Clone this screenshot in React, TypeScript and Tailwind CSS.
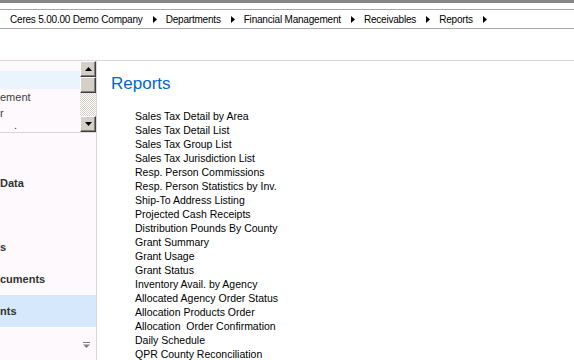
import type { ReactNode } from 'react';

// ─── Данные ─────────────────────────────
const CRUMBS = ['Ceres 5.00.00 Demo Company', 'Departments', 'Financial Management', 'Receivables', 'Reports'];

const REPORTS = [
	'Sales Tax Detail by Area',
	'Sales Tax Detail List',
	'Sales Tax Group List',
	'Sales Tax Jurisdiction List',
	'Resp. Person Commissions',
	'Resp. Person Statistics by Inv.',
	'Ship-To Address Listing',
	'Projected Cash Receipts',
	'Distribution Pounds By County',
	'Grant Summary',
	'Grant Usage',
	'Grant Status',
	'Inventory Avail. by Agency',
	'Allocated Agency Order Status',
	'Allocation Products Order',
	'Allocation\u00a0 Order Confirmation',
	'Daily Schedule',
	'QPR County Reconciliation',
];

const NAV = [
	{ label: '', active: false },
	{ label: 'Data', active: false },
	{ label: '', active: false },
	{ label: 's', active: false },
	{ label: 'cuments', active: false },
	{ label: 'nts', active: true },
];

// ─── Иконки ─────────────────────────────
function Arrow() {
	return (
		<svg width="4" height="7" viewBox="0 0 4 7" className="ml-[10px] mr-[9px] shrink-0">
			<path d="M0 0L4 3.5L0 7Z" fill="#000" />
		</svg>
	);
}

function ScrollButton({ dir }: { dir: 'up' | 'down' }) {
	return (
		<div className="h-[16px] shrink-0 flex items-center justify-center bg-[#d4d0c8] border border-t-white border-l-white border-r-[#404040] border-b-[#404040] shadow-[inset_-1px_-1px_0_#808080]">
			<svg width="7" height="4" viewBox="0 0 7 4">
				<path d={dir === 'up' ? 'M0 4L3.5 0L7 4Z' : 'M0 0L3.5 4L7 0Z'} fill="#000" />
			</svg>
		</div>
	);
}

function ListRow({ children, h }: { children?: ReactNode; h: string }) {
	return (
		<div className={`${h} shrink-0 flex items-center text-[11px] text-[#404040] whitespace-nowrap`}>
			{children}
		</div>
	);
}

// ─── Главный компонент ──────────────────
export default function App() {
	return (
		<div className="w-[574px] h-[360px] overflow-hidden bg-white flex flex-col font-['Liberation_Sans',Arial,sans-serif]">
			<div className="h-[3px] bg-[#868686] shrink-0" />
			<div className="h-[6px] shrink-0" />
			{/* Хлебные крошки */}
			<div className="h-[20px] shrink-0 border-y border-[#a6a6a6] flex items-center pl-[10px] text-[10px] tracking-[-0.2px] text-black">
				{CRUMBS.map((c) => (
					<div key={c} className="flex items-center whitespace-nowrap">
						<span>{c}</span>
						<Arrow />
					</div>
				))}
			</div>
			<div className="h-[31px] shrink-0" />

			<div className="flex flex-1 min-h-0 border-t border-[#d8d8d8]">
				{/* Левая панель */}
				<div className="w-[97px] shrink-0 bg-[#fdf9fd] border-r border-[#d8d8d8] flex flex-col overflow-hidden">
					<div className="h-[72px] flex border-b border-[#d8d8d8] shrink-0">
						<div className="flex-1 flex flex-col overflow-hidden">
							<ListRow h="h-[10px]" />
							<div className="h-[18px] shrink-0 bg-[#eaf4fd]" />
							<ListRow h="h-[16px]">ement</ListRow>
							<ListRow h="h-[16px]">r</ListRow>
							<div className="h-[11px] shrink-0 flex items-start text-[11px] leading-[9px] text-[#404040] pl-[14px]">
								.
							</div>
						</div>
						<div className="w-[16px] flex flex-col">
							<ScrollButton dir="up" />
							<div className="h-[16px] shrink-0 bg-[#d4d0c8] border border-t-white border-l-white border-r-[#404040] border-b-[#404040] shadow-[inset_-1px_-1px_0_#808080]" />
							<div className="flex-1 bg-[repeating-conic-gradient(#d4d0c8_0%_25%,#ffffff_0%_50%)] bg-[length:2px_2px]" />
							<ScrollButton dir="down" />
						</div>
					</div>

					<div className="h-[2px] shrink-0" />
					{NAV.map((n, i) => (
						<div
							key={i}
							className={`h-[32px] shrink-0 flex items-center text-[11px] font-bold text-[#333333] whitespace-nowrap ${n.active ? 'bg-[#d6e9fc]' : ''}`}
						>
							{n.label}
						</div>
					))}
					<div className="flex-1 flex justify-end pr-[6px] pt-[15px]">
						<svg width="7" height="7" viewBox="0 0 7 7">
							<rect x="0" y="0" width="7" height="1" fill="#808080" />
							<path d="M0 2.5H7L3.5 6Z" fill="#808080" />
						</svg>
					</div>
				</div>

				{/* Контент */}
				<div className="flex-1 pl-[14px] pt-[13px]">
					<h1 className="text-[17px] leading-[20px] text-[#0066cc]">Reports</h1>
					<div className="mt-[15px] pl-[24px] flex flex-col">
						{REPORTS.map((r) => (
							<div key={r} className="text-[10.5px] leading-[14px] text-black whitespace-nowrap">
								{r}
							</div>
						))}
					</div>
				</div>
			</div>
		</div>
	);
}
